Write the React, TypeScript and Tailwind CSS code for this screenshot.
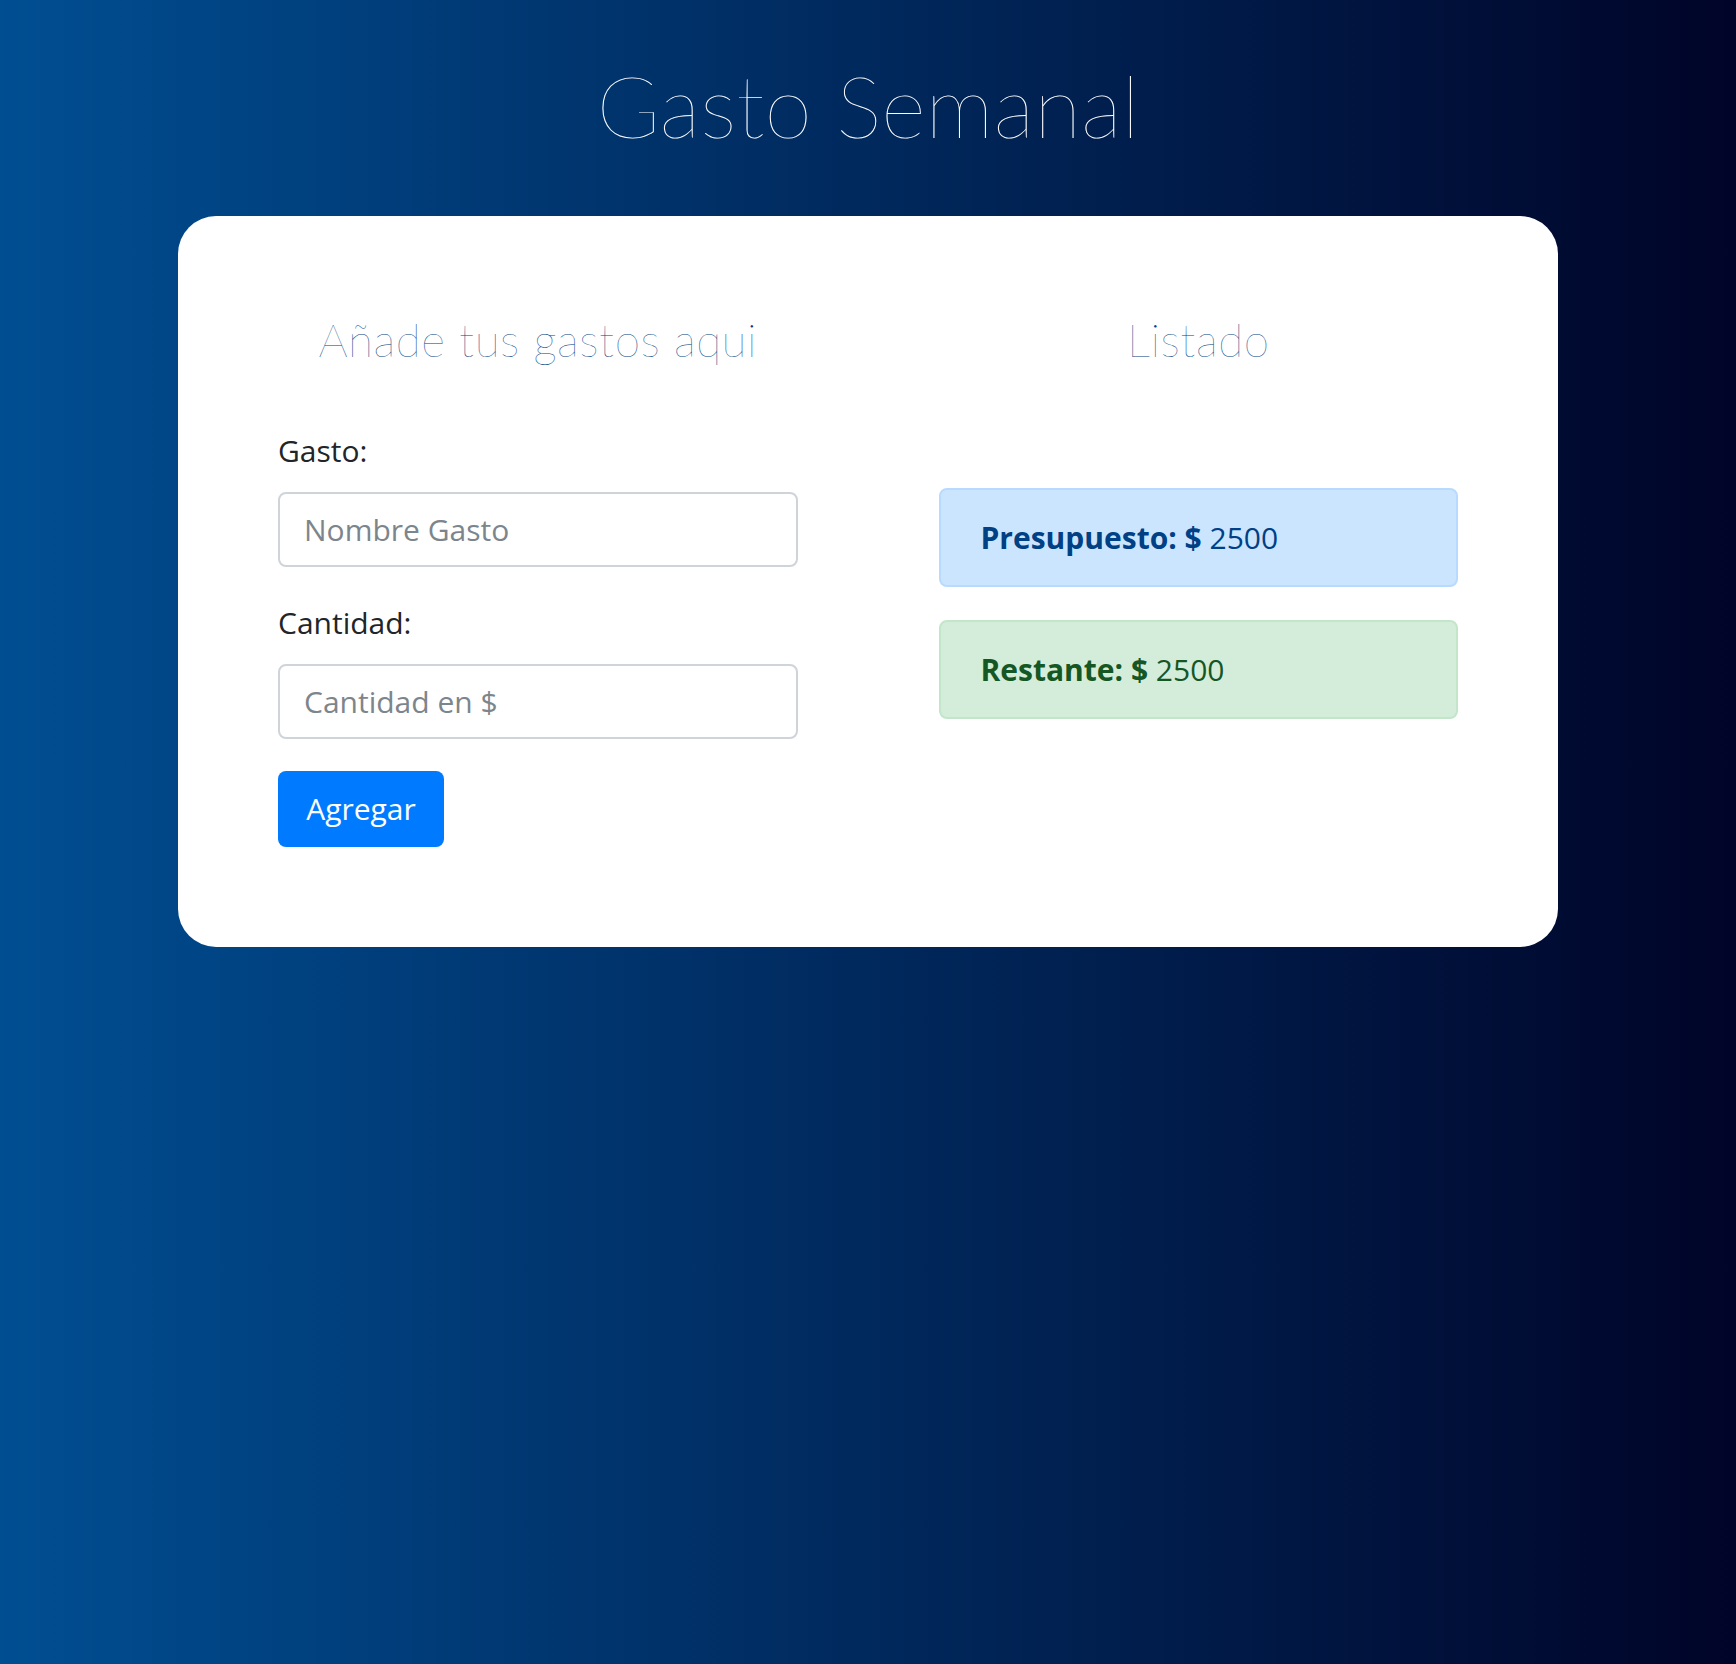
import React, { useState } from 'react';

export default function App() {
  const [nombre, setNombre] = useState('');
  const [cantidad, setCantidad] = useState('');
  const presupuesto = 2500;
  const restante = 2500;

  return (
    <div className="min-h-screen bg-[linear-gradient(to_right,#004e92,#000428)] font-['Open_Sans',sans-serif] text-[#212529]">
      {/* Header */}
      <header className="pt-[53px] mb-[60px]">
        <h1 className="text-center font-['Lato',sans-serif] text-[86px] leading-[103px] font-thin text-white">
          Gasto Semanal
        </h1>
      </header>

      {/* Main card */}
      <div className="mx-auto w-[1380px] rounded-[38px] bg-white px-[100px] pt-[97px] pb-[100px]">
        <div className="grid grid-cols-2 gap-x-[141px]">
          {/* Form */}
          <div>
            <h2 className="mb-[60px] text-center font-['Lato',sans-serif] text-[46px] leading-[54px] font-thin tracking-[0.5px] text-[#00417f]">
              Añade tus gastos aqui
            </h2>
            <form onSubmit={(e) => e.preventDefault()}>
              <div className="mb-[32px]">
                <label className="mb-[17px] block text-[30px] leading-[48px]">Gasto:</label>
                <input
                  type="text"
                  value={nombre}
                  onChange={(e) => setNombre(e.target.value)}
                  placeholder="Nombre Gasto"
                  className="block h-[75px] w-full rounded-[8px] border-2 border-[#ced4da] bg-white px-[24px] text-[30px] text-[#495057] outline-none placeholder:text-[#7d858c]"
                />
              </div>
              <div className="mb-[32px]">
                <label className="mb-[17px] block text-[30px] leading-[48px]">Cantidad:</label>
                <input
                  type="number"
                  value={cantidad}
                  onChange={(e) => setCantidad(e.target.value)}
                  placeholder="Cantidad en $"
                  className="block h-[75px] w-full rounded-[8px] border-2 border-[#ced4da] bg-white px-[24px] text-[30px] text-[#495057] outline-none placeholder:text-[#7d858c]"
                />
              </div>
              <button
                type="submit"
                className="flex h-[76px] w-[166px] items-center justify-center rounded-[8px] bg-[#007bff] text-[30px] leading-[48px] text-white"
              >
                Agregar
              </button>
            </form>
          </div>

          {/* Listado */}
          <div>
            <h2 className="mb-[121px] text-center font-['Lato',sans-serif] text-[46px] leading-[54px] font-thin tracking-[0.5px] text-[#00417f]">
              Listado
            </h2>
            <div className="rounded-[8px] border-2 border-[#b8daff] bg-[#cce5ff] px-[40px] py-[23.5px] text-[30px] leading-[48px] text-[#004085]">
              <span className="font-bold">Presupuesto: $</span> {presupuesto}
            </div>
            <div className="mt-[33px] rounded-[8px] border-2 border-[#c3e6cb] bg-[#d4edda] px-[40px] py-[23.5px] text-[30px] leading-[48px] text-[#155724]">
              <span className="font-bold">Restante: $</span> {restante}
            </div>
          </div>
        </div>
      </div>
    </div>
  );
}
